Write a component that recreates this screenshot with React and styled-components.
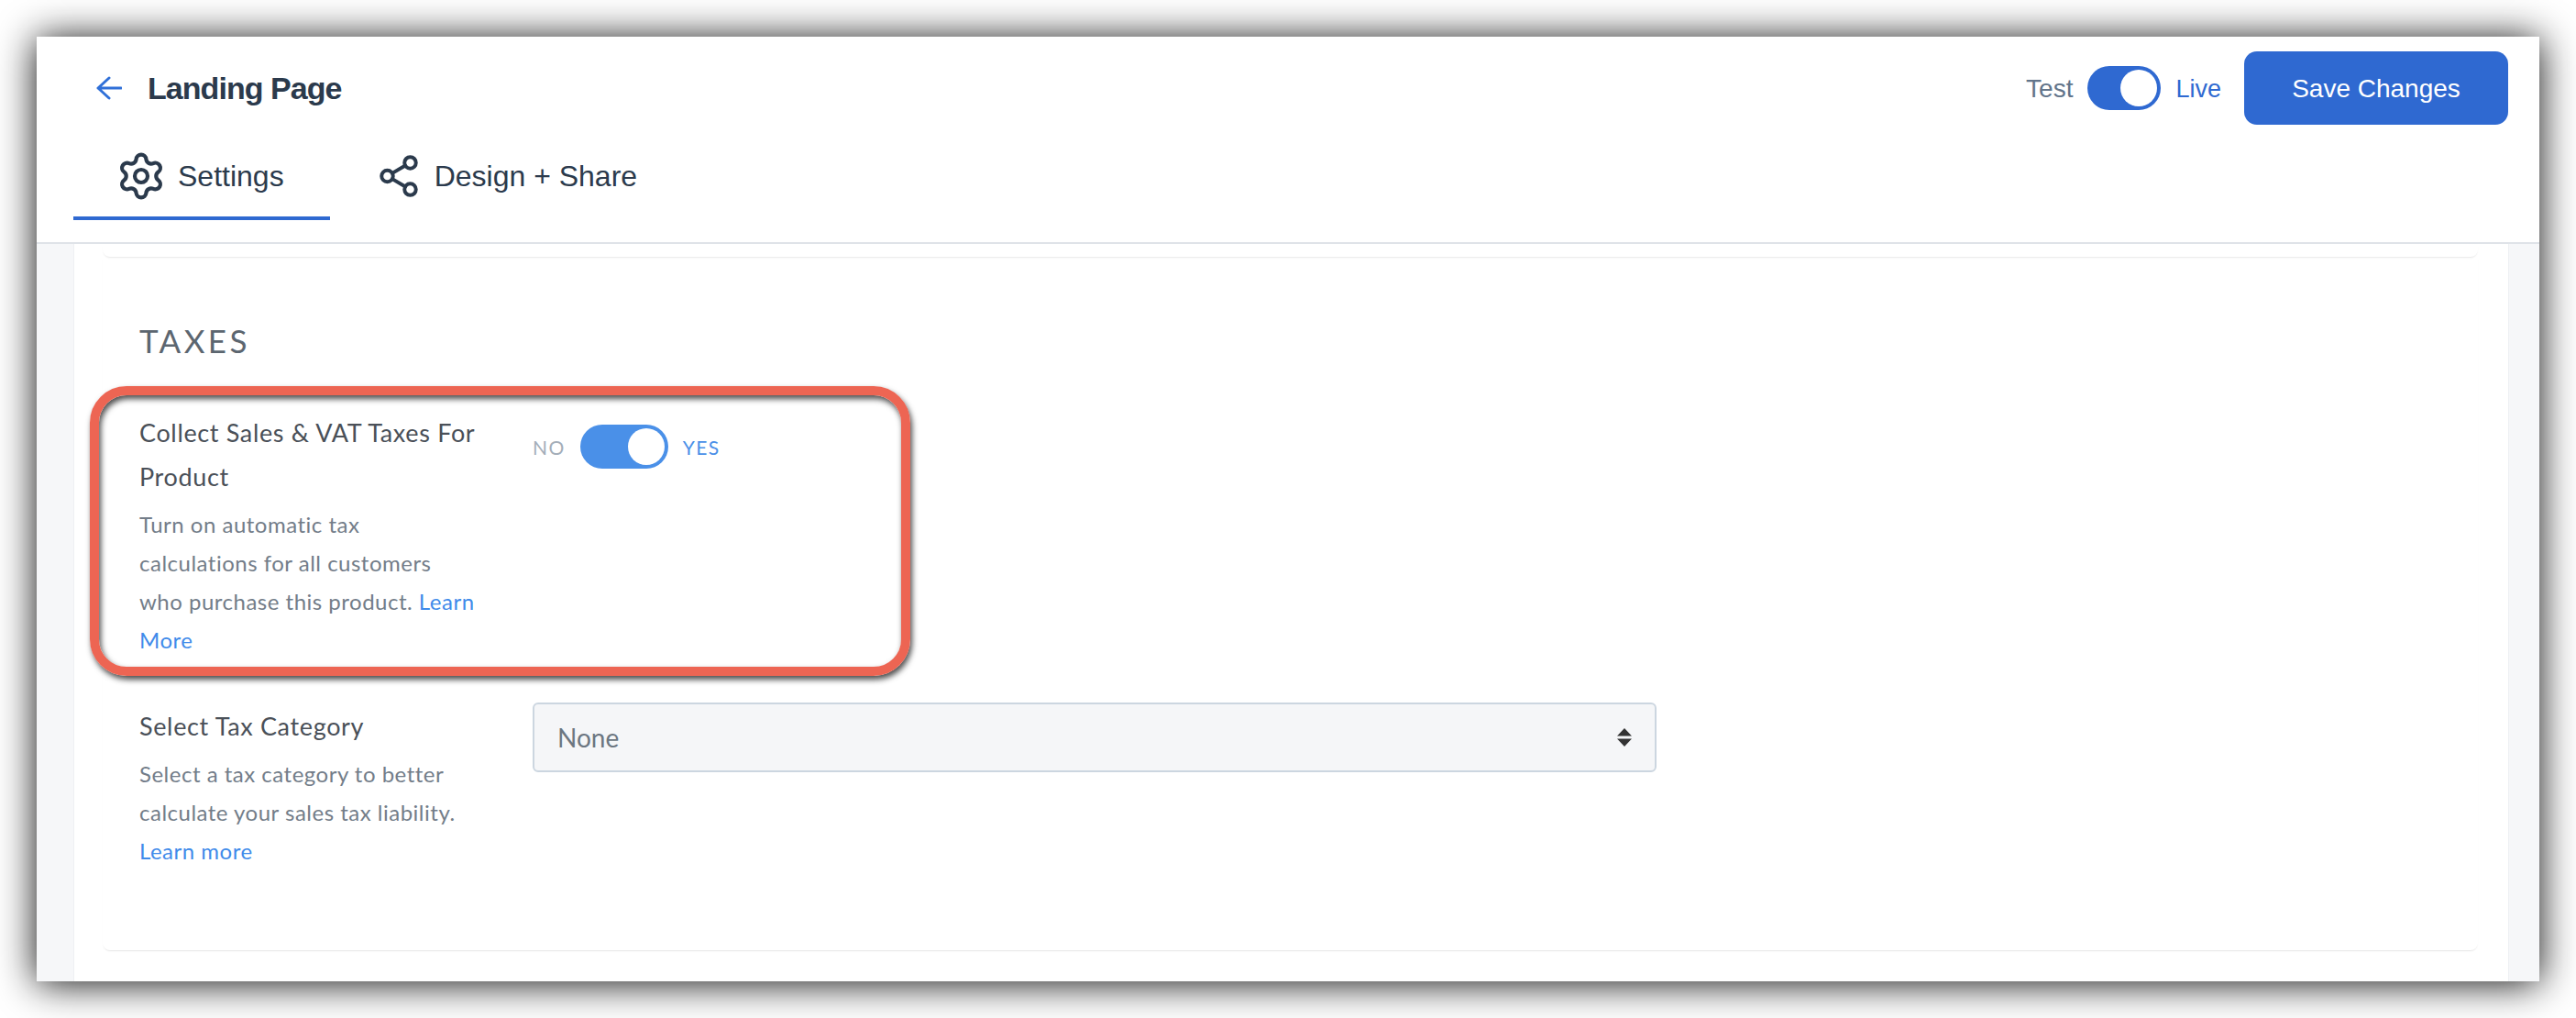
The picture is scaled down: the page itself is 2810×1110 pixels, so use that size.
import React from "react";
import styled, { createGlobalStyle } from "styled-components";
import { Settings, Share2 } from "lucide-react";

const Global = createGlobalStyle`
  html, body { margin: 0; padding: 0; background: #fff; }
  * { box-sizing: border-box; }
`;

const Stage = styled.div`
  width: 2810px;
  height: 1110px;
  padding: 40px;
  overflow: hidden;
  background: #fff;
`;

const AppWindow = styled.div`
  width: 2730px;
  height: 1030px;
  display: flex;
  flex-direction: column;
  background: #fff;
  box-shadow: 0 2px 40px rgba(0, 0, 0, 0.95);
`;

const Header = styled.header`
  flex: none;
  height: 226px;
  padding-top: 16px;
  border-bottom: 2px solid #dfe3e8;
  background: #fff;
  font-family: "Liberation Sans", Arial, sans-serif;
`;

const TopRow = styled.div`
  height: 80px;
  display: flex;
  align-items: center;
  padding: 0 34px 0 65px;
`;

const BackArrow = styled.svg`
  flex: none;
  width: 28px;
  height: 26px;
  margin-right: 28px;
  fill: none;
  stroke: #3070d8;
  stroke-width: 3;
  stroke-linecap: round;
  stroke-linejoin: round;
`;

const Title = styled.h1`
  margin: 0;
  font-size: 34px;
  font-weight: 700;
  letter-spacing: -0.95px;
  color: #2b3a4c;
`;

const Spacer = styled.div`
  flex: 1;
`;

const ModeLabel = styled.span`
  padding-top: 2px;
  font-size: ${(p) => (p.$active ? 27 : 28)}px;
  color: ${(p) => (p.$active ? "#2f69d1" : "#62748a")};
`;

const Track = styled.div`
  flex: none;
  width: ${(p) => p.$width}px;
  height: 48px;
  padding: 4px;
  border-radius: 24px;
  display: flex;
  justify-content: flex-end;
  background: ${(p) => p.$color};
`;

const Knob = styled.div`
  width: 40px;
  height: 40px;
  border-radius: 50%;
  background: #fff;
`;

const ModeSwitch = styled.div`
  display: flex;
  align-items: center;
  gap: 16px;
  margin-right: 25px;
`;

const SaveButton = styled.button`
  width: 288px;
  height: 80px;
  padding: 2px 0 0;
  border: 0;
  border-radius: 14px;
  background: #2f69d1;
  color: #fff;
  font-family: inherit;
  font-size: 28px;
`;

const Tabs = styled.nav`
  display: flex;
  margin: 10px 0 0 40px;
`;

const Tab = styled.div`
  height: 94px;
  display: flex;
  align-items: center;
  gap: ${(p) => p.$gap}px;
  padding: 2px ${(p) => p.$right}px 0 ${(p) => p.$left}px;
  border-bottom: 4px solid ${(p) => (p.$active ? "#2f69d1" : "transparent")};
  color: #2b3a4c;
  font-size: 32px;
`;

const Body = styled.main`
  flex: 1;
  min-height: 0;
  display: flex;
  padding: 0 33px 0 40px;
  background: #f6f7f9;
  font-family: Lato, "Open Sans", sans-serif;
`;

const Panel = styled.div`
  flex: 1;
  padding: 0 33px 0 31px;
  background: #fff;
  border-left: 1px solid #eef0f3;
  border-right: 1px solid #eef0f3;
`;

const CardStub = styled.div`
  position: relative;
  height: 14px;
  border-radius: 0 0 8px 8px;
  background: #fff;
  box-shadow: 0 2px 2px -1px rgba(0, 0, 0, 0.1);
`;

const Card = styled.section`
  height: 756px;
  padding: 73px 40px 0;
  border-radius: 0 0 8px 8px;
  background: #fff;
  box-shadow: 0 2px 2px -1px rgba(0, 0, 0, 0.1);
`;

const SectionTitle = styled.h2`
  margin: 0;
  height: 36px;
  line-height: 36px;
  font-size: 35px;
  font-weight: 400;
  letter-spacing: 3.4px;
  color: #5c6670;
`;

const Row = styled.div`
  position: relative;
  display: grid;
  grid-template-columns: 429px 1226px;
  align-items: start;
  margin-top: ${(p) => p.$top}px;
`;

const LabelCol = styled.div`
  padding-top: ${(p) => p.$pad || 0}px;
`;

const FieldLabel = styled.div`
  font-size: 27px;
  line-height: 48px;
  letter-spacing: 0.65px;
  color: #4a5058;
`;

const FieldHelp = styled.p`
  margin: 7px 0 0;
  font-size: 24px;
  line-height: 42px;
  letter-spacing: 0.5px;
  color: #737d89;
`;

const HelpLink = styled.a`
  color: #3f8bea;
`;

const YesNo = styled.div`
  display: flex;
  align-items: center;
  gap: 16px;
  padding-top: 15px;
`;

const YesNoLabel = styled.span`
  font-size: 21px;
  letter-spacing: 1.4px;
  color: ${(p) => (p.$active ? "#4a90e8" : "#a4aeb9")};
`;

const SelectBox = styled.div`
  height: 76px;
  padding: 0 25px;
  display: flex;
  align-items: center;
  justify-content: space-between;
  border: 2px solid #ccd6e0;
  border-radius: 6px;
  background: #f5f6f8;
  font-size: 28px;
  color: #6c7681;
`;

const Updown = styled.svg`
  flex: none;
  width: 16px;
  height: 20px;
  fill: #333;
`;

const Annotation = styled.div`
  position: absolute;
  left: -54px;
  top: -27px;
  width: 895px;
  height: 316px;
  border: 10px solid #ed6553;
  border-radius: 40px;
  pointer-events: none;
  box-shadow: 2px 4px 6px rgba(0, 0, 0, 0.7), inset 2px 4px 6px rgba(0, 0, 0, 0.7);
`;

export default function App() {
  return (
    <Stage>
      <Global />
      <AppWindow>
        <Header>
          <TopRow>
            <BackArrow viewBox="0 0 28 26">
              <path d="M14 2 2 13l12 11M2 13h25" />
            </BackArrow>
            <Title>Landing Page</Title>
            <Spacer />
            <ModeSwitch>
              <ModeLabel>Test</ModeLabel>
              <Track $width={80} $color="#2f69d1">
                <Knob />
              </Track>
              <ModeLabel $active>Live</ModeLabel>
            </ModeSwitch>
            <SaveButton>Save Changes</SaveButton>
          </TopRow>
          <Tabs>
            <Tab $active $left={46} $right={50} $gap={12}>
              <Settings size={56} strokeWidth={1.8} />
              Settings
            </Tab>
            <Tab $left={50} $right={0} $gap={14}>
              <Share2 size={50} strokeWidth={1.9} />
              Design + Share
            </Tab>
          </Tabs>
        </Header>
        <Body>
          <Panel>
            <CardStub />
            <Card>
              <SectionTitle>TAXES</SectionTitle>
              <Row $top={59}>
                <LabelCol>
                  <FieldLabel>
                    Collect Sales &amp; VAT Taxes For
                    <br />
                    Product
                  </FieldLabel>
                  <FieldHelp>
                    Turn on automatic tax
                    <br />
                    calculations for all customers
                    <br />
                    who purchase this product. <HelpLink>Learn</HelpLink>
                    <br />
                    <HelpLink>More</HelpLink>
                  </FieldHelp>
                </LabelCol>
                <YesNo>
                  <YesNoLabel>NO</YesNoLabel>
                  <Track $width={96} $color="#4a90e8">
                    <Knob />
                  </Track>
                  <YesNoLabel $active>YES</YesNoLabel>
                </YesNo>
                <Annotation />
              </Row>
              <Row $top={47}>
                <LabelCol $pad={2}>
                  <FieldLabel>Select Tax Category</FieldLabel>
                  <FieldHelp>
                    Select a tax category to better
                    <br />
                    calculate your sales tax liability.
                    <br />
                    <HelpLink>Learn more</HelpLink>
                  </FieldHelp>
                </LabelCol>
                <SelectBox>
                  None
                  <Updown viewBox="0 0 16 20">
                    <path d="M8 0l8 8.5H0zM0 11.5h16L8 20z" />
                  </Updown>
                </SelectBox>
              </Row>
            </Card>
          </Panel>
        </Body>
      </AppWindow>
    </Stage>
  );
}
